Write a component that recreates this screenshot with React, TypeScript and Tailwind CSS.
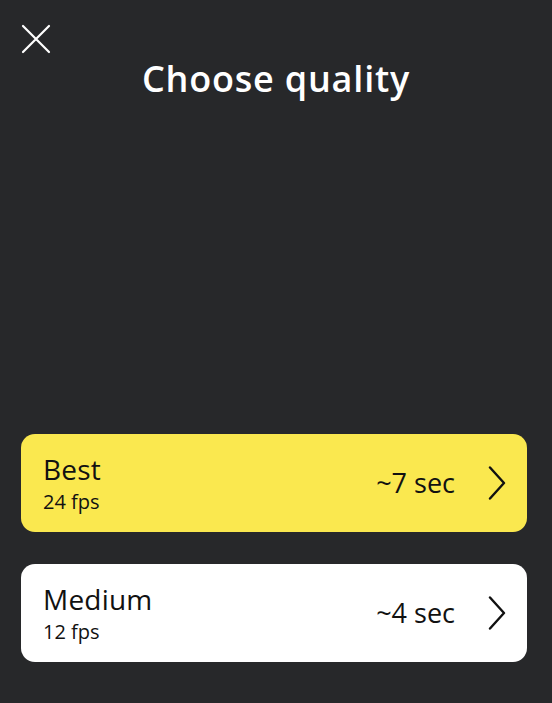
const options = [
  { name: "Best", fps: "24 fps", time: "~7 sec", selected: true },
  { name: "Medium", fps: "12 fps", time: "~4 sec", selected: false },
];

function CloseIcon() {
  return (
    <svg width="30" height="30" viewBox="0 0 30 30" fill="none" stroke="currentColor" strokeWidth="2.2" strokeLinecap="round">
      <path d="M2 2 L28 28 M28 2 L2 28" />
    </svg>
  );
}

function Chevron() {
  return (
    <svg width="18" height="34" viewBox="0 0 18 34" fill="none" stroke="currentColor" strokeWidth="2.4" strokeLinecap="round" strokeLinejoin="round">
      <path d="M2 1.5 L16 17 L2 32.5" />
    </svg>
  );
}

export default function App() {
  return (
    <div
      className="w-[552px] h-[703px] bg-[#27282a] text-white flex flex-col"
      style={{ fontFamily: '"Open Sans", "Noto Sans", sans-serif' }}
    >
      <header className="relative pt-[56px] h-[110px]">
        <button className="absolute left-[21px] top-[24px] text-white">
          <CloseIcon />
        </button>
        <h1 className="text-center text-[36px] font-semibold leading-[46px] tracking-[0.8px]">
          Choose quality
        </h1>
      </header>

      <main className="flex-1 flex flex-col justify-end pl-[21px] pr-[25px] pb-[41px] gap-[32px]">
        {options.map((o) => (
          <div
            key={o.name}
            className={
              "h-[98px] rounded-[14px] flex items-center pl-[22px] pr-[21px] text-[#111]" +
              (o.selected ? " bg-[#fae84f]" : " bg-white")
            }
          >
            <div className="flex-1">
              <div className="text-[28px] leading-[32px] tracking-[0.2px]">{o.name}</div>
              <div className="text-[20px] leading-[24px] mt-[5px]">{o.fps}</div>
            </div>
            <div className="text-[27px] leading-[32px] mr-[33px]">{o.time}</div>
            <Chevron />
          </div>
        ))}
      </main>
    </div>
  );
}
